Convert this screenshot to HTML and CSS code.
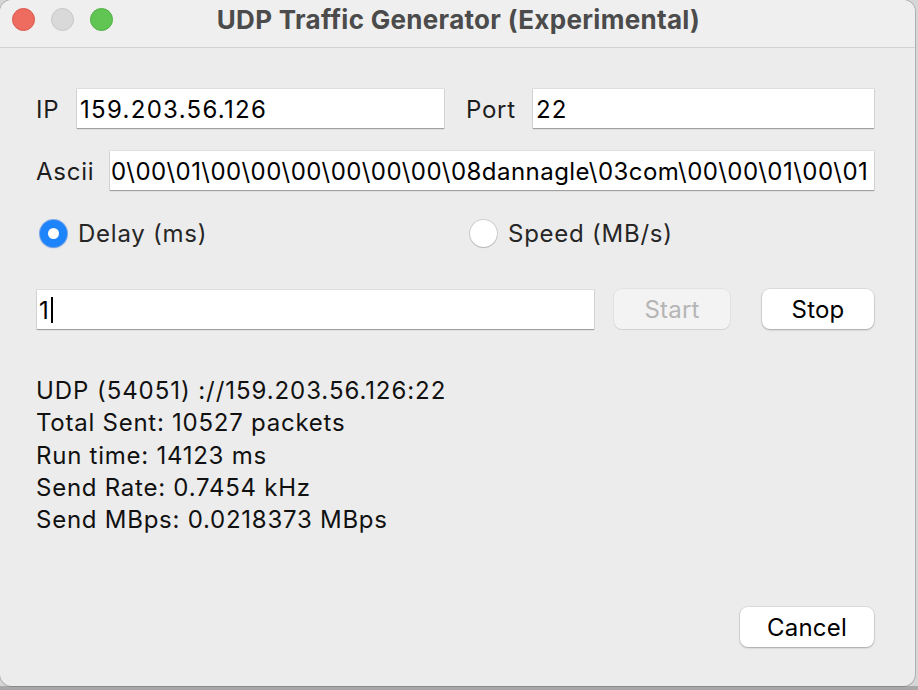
FILE: index.html
```html
<!DOCTYPE html>
<html>
<head>
<meta charset="utf-8">
<link rel="stylesheet" href="styles.css">
</head>
<body>
<div class="desk">
  <div class="window">
    <div class="titlebar">
      <div class="lights">
        <span class="light red"></span>
        <span class="light grey"></span>
        <span class="light green"></span>
      </div>
      <div class="title">UDP Traffic Generator (Experimental)</div>
    </div>
    <div class="content">
      <div class="row row-ip">
        <label class="lbl lbl-ip">IP</label>
        <div class="field field-ip">159.203.56.126</div>
        <label class="lbl lbl-port">Port</label>
        <div class="field field-port">22</div>
      </div>
      <div class="row row-ascii">
        <label class="lbl lbl-ascii">Ascii</label>
        <div class="field field-ascii">0\00\01\00\00\00\00\00\00\08dannagle\03com\00\00\01\00\01</div>
      </div>
      <div class="row row-radio">
        <div class="radio-opt opt-delay"><span class="radio on"></span><span class="rlbl">Delay (ms)</span></div>
        <div class="radio-opt opt-speed"><span class="radio"></span><span class="rlbl">Speed (MB/s)</span></div>
      </div>
      <div class="row row-run">
        <div class="field field-delay">1<span class="caret"></span></div>
        <div class="btn btn-start">Start</div>
        <div class="btn btn-stop">Stop</div>
      </div>
      <div class="status">
        <div class="wide">UDP (54051) ://159.203.56.126:22</div>
        <div>Total Sent: 10527 packets</div>
        <div>Run time: 14123 ms</div>
        <div>Send Rate: 0.7454 kHz</div>
        <div>Send MBps: 0.0218373 MBps</div>
      </div>
      <div class="footer">
        <div class="btn btn-cancel">Cancel</div>
      </div>
    </div>
  </div>
</div>
</body>
</html>
```
FILE: styles.css
```css
html, body {
  margin: 0;
  padding: 0;
}
body {
  width: 918px;
  height: 690px;
  background: #bdbdbd;
  font-family: Inter, "Liberation Sans", Arial, sans-serif;
  letter-spacing: 0.75px;
  overflow: hidden;
}
.desk {
  width: 918px;
  height: 690px;
  background: linear-gradient(to bottom, #d6d6d6 0, #d6d6d6 686px, #a8a8a8 686px);
}
.window {
  width: 915px;
  height: 686px;
  background: #ececec;
  border-radius: 12px;
  overflow: hidden;
  box-shadow: 0 0 0 1px rgba(0,0,0,0.18);
  display: flex;
  flex-direction: column;
}
.titlebar {
  height: 47px;
  flex: none;
  background: #efefef;
  border-bottom: 1px solid #d2d2d2;
  display: flex;
  align-items: center;
  position: relative;
}
.lights {
  display: flex;
  gap: 16px;
  padding-left: 12px;
  margin-top: -9px;
}
.light {
  width: 23px;
  height: 23px;
  border-radius: 50%;
  box-sizing: border-box;
}
.red { background: #ee6b5f; border: 1px solid #d9574c; }
.grey { background: #d9d9d9; border: 1px solid #c6c6c6; }
.green { background: #61c554; border: 1px solid #4fae43; }
.title {
  flex: 1;
  text-align: center;
  margin-left: -111px;
  margin-top: -9px;
  font-weight: bold;
  font-size: 26px;
  letter-spacing: 0.3px;
  color: #4b4b4b;
}
.content {
  flex: 1;
  padding: 41px 41px 0 36px;
  display: flex;
  flex-direction: column;
}
.row {
  display: flex;
  align-items: center;
}
.lbl {
  font-size: 24px;
  color: #1d1d1d;
  padding-top: 2px;
}
.field {
  background: #ffffff;
  height: 39px;
  box-sizing: border-box;
  box-shadow: 0 0 0 1px rgba(0,0,0,0.06), 0 1px 1px rgba(0,0,0,0.28);
  font-size: 24px;
  color: #000;
  display: flex;
  align-items: center;
  padding-left: 3px;
  padding-top: 2px;
  white-space: nowrap;
  overflow: hidden;
}
.lbl-ip { width: 41px; }
.field-ip { width: 367px; letter-spacing: 1.3px; }
.lbl-port { margin-left: 22px; width: 67px; }
.field-port { flex: 1; letter-spacing: 1.1px; }
.row-ascii { margin-top: 23px; }
.lbl-ascii { width: 74px; }
.field-ascii {
  flex: 1;
  padding-left: 1px;
  letter-spacing: 0.46px;
}
.row-radio {
  margin-top: 29px;
  height: 28px;
}
.radio-opt {
  display: flex;
  align-items: center;
}
.opt-delay { width: 430px; margin-left: 4px; }
.radio {
  width: 27px;
  height: 27px;
  border-radius: 50%;
  box-sizing: border-box;
  background: #fff;
  box-shadow: 0 0 0 1px rgba(0,0,0,0.12), 0 1px 1px rgba(0,0,0,0.12);
  margin-right: 11px;
  position: relative;
}
.radio.on {
  background: #1d84fb;
  box-shadow: 0 0 0 1px rgba(20,110,230,0.5), 0 1px 2px rgba(0,80,200,0.3);
}
.radio.on::after {
  content: "";
  position: absolute;
  left: 8px;
  top: 8px;
  width: 11px;
  height: 11px;
  border-radius: 50%;
  background: #fff;
}
.rlbl {
  font-size: 24px;
  color: #262626;
}
.row-run {
  margin-top: 42px;
  margin-left: 1px;
}
.field-delay { width: 557px; padding-left: 2px; }
.caret {
  display: inline-block;
  width: 2px;
  height: 26px;
  background: #000;
  margin-left: 1px;
}
.btn {
  height: 40px;
  box-sizing: border-box;
  border-radius: 8px;
  display: flex;
  align-items: center;
  justify-content: center;
  font-size: 24px;
  letter-spacing: 0.2px;
}
.btn-start {
  width: 116px;
  margin-left: 20px;
  background: #f3f3f3;
  color: #b5b5b5;
  box-shadow: 0 0 0 1px rgba(0,0,0,0.04), 0 1px 1px rgba(0,0,0,0.08);
}
.btn-stop, .btn-cancel {
  background: #ffffff;
  color: #000;
  box-shadow: 0 0 0 1px rgba(0,0,0,0.06), 0 1px 2px rgba(0,0,0,0.25);
}
.btn-stop {
  width: 112px;
  margin-left: 32px;
}
.status {
  margin-top: 46px;
  font-size: 24px;
  line-height: 32.3px;
  color: #111;
}
.status .wide { letter-spacing: 0.93px; }
.footer {
  margin-top: 71px;
  display: flex;
  justify-content: flex-end;
}
.btn-cancel {
  width: 134px;
  height: 40px;
}
```
